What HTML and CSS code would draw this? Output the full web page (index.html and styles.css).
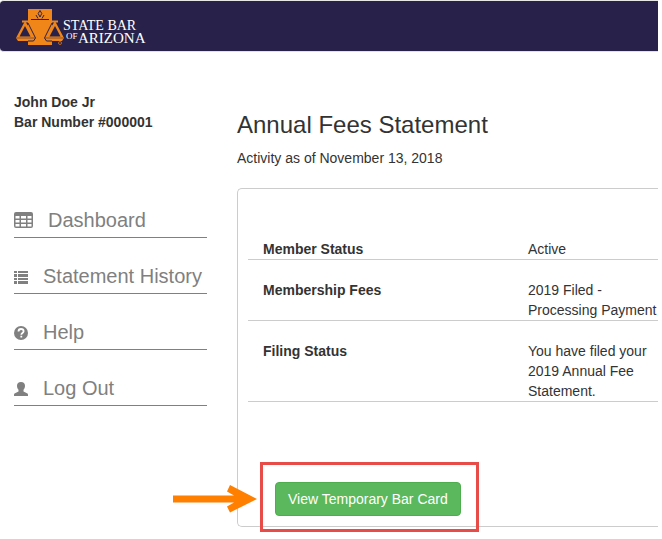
FILE: index.html
```html
<!DOCTYPE html>
<html lang="en">
<head>
    <meta charset="UTF-8">
    <title>Annual Fees Statement</title>
    <link rel="stylesheet" href="styles.css">
</head>

<body>
<header class="navbar">
    <a class="brand" href="#" aria-label="State Bar of Arizona">
        <svg width="136" height="50" viewBox="14 1 136 50">
            <rect x="28" y="9" width="24" height="36" fill="#f08519"/>
            <!-- flame -->
            <path d="M40 10.500l1.800 3-1.800 3.500-1.800-3.500zM36 15l2 3.500M44 15l-2 3.500" fill="none" stroke="#28224a" stroke-width="1"/>
            <path d="M31 19.500h18" stroke="#28224a" stroke-width="1"/>
            <!-- scales -->
            <path d="M25 21L16 38l2 3h16l2-3zM55 21L64 38l-2 3H46l-2-3z" fill="#f08519"/>
            <path d="M25 26L19.500 36.500h11zM55 26L49.500 36.500h11z" fill="#28224a"/>
            <path d="M28 23l7.500 15-2 3H28M52 23l-7.500 15 2 3H52" fill="none" stroke="#28224a" stroke-width="1"/>
            <path d="M16.500 38H35M45 38h18.500" stroke="#28224a" stroke-width=".5"/>
            <path d="M22 20.500h36v2H22z" fill="#f08519"/>
            <circle cx="60" cy="43" r="1.500" fill="none" stroke="#b5652a" stroke-width="1"/>
            <g class="brand-text">
                <text x="63" y="30" font-size="14">STATE BAR</text>
                <text x="66" y="39" font-size="9">OF</text>
                <text x="78" y="43" font-size="15">ARIZONA</text>
            </g>
        </svg>
    </a>
</header>

<div class="content">
    <aside class="sidebar">
        <div class="member">
            John Doe Jr<br>
            Bar Number #000001
        </div>
        <nav class="menu">
            <a href="#">
                <svg width="19" height="16" viewBox="0 0 19 16">
                    <path fill-rule="evenodd" d="M2 0h15a2 2 0 0 1 2 2v12a2 2 0 0 1-2 2H2a2 2 0 0 1-2-2V2a2 2 0 0 1 2-2zM1.500 4v2.500h4V4zM7 4v2.500h5V4zM13.500 4v2.500h4V4zM1.500 8v2.500h4V8zM7 8v2.500h5V8zM13.500 8v2.500h4V8zM1.500 12v2.500h4V12zM7 12v2.500h5V12zM13.500 12v2.500h4V12z"/>
                </svg>
                Dashboard
            </a>
            <a href="#">
                <svg width="14" height="16" viewBox="0 0 14 16">
                    <path d="M0 3h3v2H0zM4 3h10v2H4zM0 6h3v3H0zM4 6h10v3H4zM0 10h3v2H0zM4 10h10v2H4zM0 13h3v3H0zM4 13h10v3H4z"/>
                </svg>
                Statement History
            </a>
            <a href="#">
                <svg width="14" height="16" viewBox="0 0 14 16">
                    <circle cx="7" cy="9" r="7"/>
                    <path d="M4.500 7.500C4.500 5.500 5.500 5 7 5s2.600.7 2.600 2.200C9.600 9 7.300 8.800 7.300 10.700M7.300 11.700v1.800" fill="none" stroke="#fff" stroke-width="1.800"/>
                </svg>
                Help
            </a>
            <a href="#">
                <svg width="14" height="16" viewBox="0 0 14 16">
                    <path d="M7 2c2.600 0 4 1.500 4 3.800 0 1.700-.6 3-1.500 4v1.700l3.500 1.700c.7.300 1 .8 1 1.500V16H0v-1.300c0-.7.300-1.200 1-1.500l3.500-1.700V9.800C3.600 8.800 3 7.500 3 5.800 3 3.500 4.400 2 7 2z"/>
                </svg>
                Log Out
            </a>
        </nav>
    </aside>

    <main class="statement">
        <h1>Annual Fees Statement</h1>
        <p>Activity as of November 13, 2018</p>
        <div class="panel">
            <table class="status">
                <tr>
                    <th scope="row">Member Status</th>
                    <td>Active</td>
                </tr>
                <tr>
                    <th scope="row">Membership Fees</th>
                    <td>2019 Filed - Processing Payment</td>
                </tr>
                <tr>
                    <th scope="row">Filing Status</th>
                    <td>You have filed your 2019 Annual Fee Statement.</td>
                </tr>
            </table>
            <div class="action">
                <button type="button" class="btn">View Temporary Bar Card</button>
                <span class="callout"></span>
                <svg class="arrow" width="84" height="28" viewBox="0 0 84 28">
                    <path d="M0 10.500h61l-7-4L57 0l27 14-27 13.500-3-6 7-4H0z"/>
                </svg>
            </div>
        </div>
    </main>
</div>
</body>
</html>
```

FILE: styles.css
```css
* {
  box-sizing: border-box;
}

body {
  margin: 0 4px 0 0;
  font-family: "Liberation Sans", Arial, Helvetica, sans-serif;
  font-size: 14px;
  line-height: 20px;
  color: #333;
  background-color: #fff;
}

.navbar {
  display: flex;
  padding-left: 14px;
  background-color: #28224a;
  border-top: 1px solid #e7e7e7;
  border-bottom: 1px solid #e0dff0;
  border-radius: 4px 0 0 4px;
}

.brand svg {
  display: block;
}

.brand-text {
  fill: #fff;
  font-family: "Liberation Serif", "Times New Roman", serif;
}

.content {
  display: flex;
  gap: 30px;
  padding: 40px 0 12px 14px;
}

.sidebar {
  flex: 0 0 193px;
}

.member {
  font-weight: bold;
}

.menu {
  display: flex;
  flex-direction: column;
  gap: 24px;
  margin-top: 74px;
}

.menu a {
  display: flex;
  align-items: center;
  gap: 15px;
  padding-bottom: 3px;
  border-bottom: 1px solid #808080;
  color: #808080;
  font-size: 20px;
  line-height: 28px;
  text-decoration: none;
  white-space: nowrap;
}

.menu svg {
  fill: #808080;
}

.statement {
  flex: 1;
  min-width: 0;
  padding-top: 20px;
}

.statement h1 {
  margin: 0 0 10px;
  font-size: 24px;
  font-weight: normal;
  line-height: 26px;
}

.statement p {
  margin: 0 0 20px;
}

/* runs off the right edge of the page */
.panel {
  padding: 30px 0 10px 10px;
  border: 1px solid #ccc;
  border-right: 0;
  border-radius: 5px 0 0 5px;
}

.status {
  width: 100%;
  border-collapse: separate;
  border-spacing: 0;
  table-layout: fixed;
}

.status th,
.status td {
  padding: 20px 0 0 15px;
  border-bottom: 1px solid #ccc;
  text-align: left;
  vertical-align: top;
}

.status th {
  width: 265px;
}

.action {
  position: relative;
  width: fit-content;
  margin: 80px 0 0 27px;
}

.btn {
  display: block;
  padding: 6px 12px;
  border: 1px solid #4cae4c;
  border-radius: 4px;
  background-color: #5cb85c;
  color: #fff;
  font-family: inherit;
  font-size: 14px;
  line-height: 20px;
}

.callout {
  position: absolute;
  top: -20px;
  right: -18px;
  bottom: -16px;
  left: -15px;
  border: 3px solid #e84c49;
  pointer-events: none;
}

.arrow {
  position: absolute;
  top: 3px;
  left: -102px;
  fill: #ff7f00;
}
```
